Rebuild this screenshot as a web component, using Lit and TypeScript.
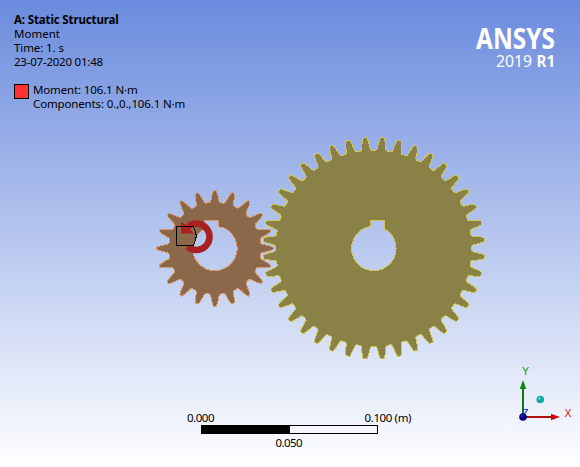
import { LitElement, html, svg, css } from "lit";
import { customElement } from "lit/decorators.js";

type Profile = [number, number][];

/** Outline of a spur gear; profile lists [fraction of pitch, radius] over one half tooth, tip first. */
function gearPath(cx: number, cy: number, teeth: number, start: number, profile: Profile): string {
  const pitch = 360 / teeth;
  const pts: string[] = [];
  const add = (deg: number, r: number) => {
    const a = ((deg - 90) * Math.PI) / 180;
    pts.push(`${(cx + r * Math.cos(a)).toFixed(2)} ${(cy + r * Math.sin(a)).toFixed(2)}`);
  };
  for (let i = 0; i < teeth; i++) {
    const c = start + i * pitch;
    for (let k = profile.length - 1; k >= 0; k--) add(c - profile[k][0] * pitch, profile[k][1]);
    for (const [f, r] of profile) add(c + f * pitch, r);
  }
  return `M${pts.join("L")}Z`;
}

const WHEEL = gearPath(373.7, 248.3, 40, 4.5, [[0.1, 110.8], [0.15, 109], [0.21, 105], [0.26, 101], [0.3, 98.8], [0.37, 98]]);
const PINION = gearPath(214.9, 248.4, 20, 0, [[0.06, 58.2], [0.11, 56.5], [0.18, 53], [0.24, 49.5], [0.29, 47.2], [0.36, 46.2], [0.46, 46]]);
const WHEEL_BORE = "M370.5 226.5V220.5H384.5V229A22.2 22.2 0 1 1 370.5 226.5Z";
const PINION_BORE = "M204.5 228.8V220.5H218.5V226.5A22.2 22.2 0 1 1 204.5 228.8Z";

@customElement("app-root")
export class AppRoot extends LitElement {
  static styles = css`
    :host { display: block; width: 580px; height: 467px; }
    .view {
      display: grid; grid-template-columns: 1fr auto; align-items: start;
      box-sizing: border-box; height: 467px; padding: 13px 25px 0 14px;
      position: relative; overflow: hidden;
      background: linear-gradient(#6a8bdd, #ffffff);
      font-family: "Noto Sans", "Open Sans", sans-serif; color: #000;
    }
    .scene { position: absolute; inset: 0; }
    .info { font-size: 11.5px; line-height: 14px; white-space: nowrap; }
    .title { font-weight: 700; letter-spacing: -0.14px; }
    .time { letter-spacing: -0.1px; }
    .date { letter-spacing: -0.22px; }
    .legend { display: flex; gap: 4px; margin-top: 14px; letter-spacing: -0.14px; }
    .swatch { box-sizing: border-box; width: 15px; height: 15px; margin-top: 1px; border: 1px solid #000; background: #ff3232; }
    .brand { display: block; margin-top: 9px; }
    .brand text { font-family: "Noto Sans", "Open Sans", sans-serif; fill: #fff; }
    .name { font-size: 29px; font-weight: 700; }
    .release { font-size: 16px; }
    .bold { font-weight: 700; }
    .scene text { font-family: "Noto Sans", "Open Sans", sans-serif; font-size: 11.5px; }
    .scene .axis { font-family: "Liberation Sans", sans-serif; font-size: 10.5px; }
  `;

  render() {
    return html`
      <div class="view">
        <div class="info">
          <div class="title">A: Static Structural</div>
          <div>Moment</div>
          <div class="time">Time: 1. s</div>
          <div class="date">23-07-2020 01:48</div>
          <div class="legend">
            <div class="swatch"></div>
            <div><div>Moment: 106.1 N·m</div><div>Components: 0.,0.,106.1 N·m</div></div>
          </div>
        </div>
        <svg class="brand" width="80" height="50" viewBox="475 22 80 50">
          <text class="name" x="476" y="49" textLength="79" lengthAdjust="spacingAndGlyphs">ANSYS</text>
          <text class="release" x="496" y="67" textLength="36" lengthAdjust="spacingAndGlyphs">2019</text>
          <text class="release bold" x="536.5" y="67" textLength="18.5" lengthAdjust="spacingAndGlyphs">R1</text>
        </svg>
        <svg class="scene" width="580" height="467" viewBox="0 0 580 467">
          ${this.gears()} ${this.momentMarker()} ${this.ruler()} ${this.triad()}
        </svg>
      </div>`;
  }

  private gears() {
    return svg`
      <path d=${PINION + PINION_BORE} fill="#8b6849" fill-rule="evenodd" stroke="#d69a6c" shape-rendering="crispEdges"/>
      <path d=${WHEEL + WHEEL_BORE} fill="#898146" fill-rule="evenodd" stroke="#cfc458" shape-rendering="crispEdges"/>`;
  }

  private momentMarker() {
    return svg`
      <path d="M187.5 246.8A13.3 13.3 0 1 0 189 225.6" fill="none" stroke="#aa2022" stroke-width="6.5"/>
      <path d="M176.5 226.5H193.5L196.5 236L193.5 245.5H176.5Z" fill="#8b6849"/>
      <path d="M181 221.5L186 225L192 222V228L190 229L193.5 233.5H181Z" fill="#aa2022"/>
      <path d="M176.5 226.5H193.5L196.5 236L193.5 245.5H176.5Z" fill="none" stroke="#000" shape-rendering="crispEdges"/>`;
  }

  private ruler() {
    return svg`
      <rect x="201.5" y="425.5" width="176" height="8" fill="none" stroke="#000"/>
      <rect x="201" y="425" width="89" height="9"/>
      <text x="187" y="422" textLength="27.5">0.000</text>
      <text x="364.5" y="422" textLength="47">0.100 (m)</text>
      <text x="275.5" y="447" textLength="27">0.050</text>`;
  }

  private triad() {
    return svg`
      <path d="M523 417V388" stroke="#0b7a12" stroke-width="2"/>
      <path d="M523 380L526.2 389H519.8Z" fill="#0a8412"/>
      <path d="M523 417H552" stroke="#b01010" stroke-width="2"/>
      <path d="M560 417L551 420.2V413.8Z" fill="#cc0808"/>
      <text class="axis" x="522" y="417" fill="#1010ff">Z</text>
      <circle cx="523" cy="417" r="3.8" fill="#06067c"/>
      <circle cx="522" cy="416" r="1" fill="#3434c8"/>
      <circle cx="540.3" cy="399.5" r="3.8" fill="#14a8a8"/>
      <circle cx="539.3" cy="398.5" r="1.3" fill="#50e4e4"/>
      <text class="axis" x="522" y="375" fill="#109a10">Y</text>
      <text class="axis" x="564.5" y="417" fill="#f01010">X</text>`;
  }
}
